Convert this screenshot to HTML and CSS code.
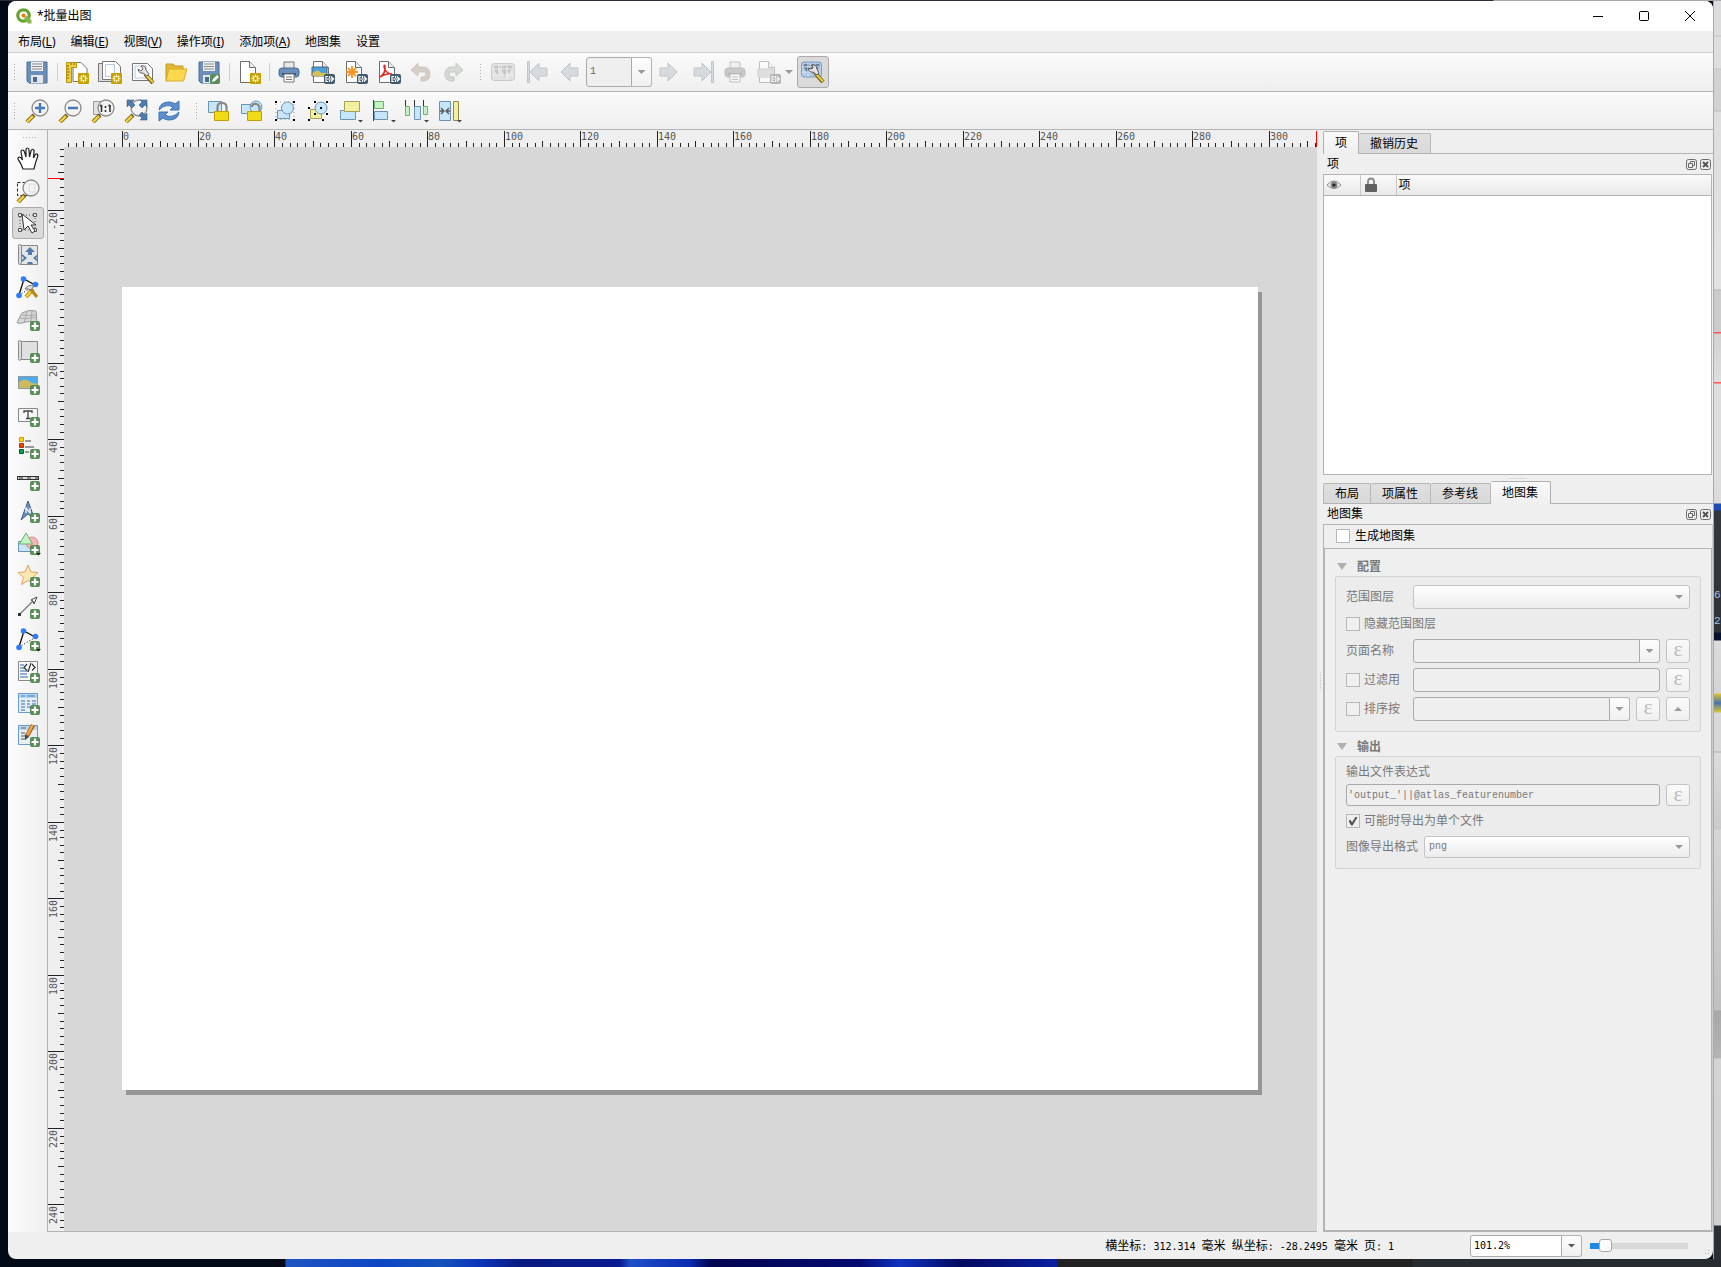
FILE: index.html
```html
<!DOCTYPE html>
<html lang="zh-CN">
<head>
    <meta charset="UTF-8">
    <meta name="viewport" content="width=device-width, initial-scale=1.0">
    <title>*批量出图</title>
    <link rel="stylesheet" href="styles.css">
</head>
<body>
    <!-- shared icon parts -->
    <svg class="sprite" aria-hidden="true">
        <symbol id="new" viewBox="0 0 24 24">
            <rect x="13" y="13" width="11" height="11" rx="1" fill="#c4a000"/>
            <path d="M18.500 14.500v8M14.500 18.500h8M15.700 15.700l5.600 5.600M21.300 15.700l-5.600 5.600" stroke="#fff6c0" stroke-width="1.300"/>
            <circle cx="18.500" cy="18.500" r="1.500" fill="#c4a000"/>
        </symbol>
        <symbol id="plus" viewBox="0 0 24 24">
            <rect x="14" y="14" width="10" height="10" rx="2" fill="#5a8c5a"/>
            <path d="M19 15.500v7M15.500 19h7" stroke="#fff" stroke-width="2.200"/>
        </symbol>
        <symbol id="export" viewBox="0 0 26 24">
            <rect x="14" y="14" width="11" height="10" rx="2" fill="#415a6e"/>
            <path d="M18 16.500h-2v5h2M17 19h6M21 16.500l2.500 2.500-2.500 2.500M19.500 16v2M19.500 20v2" fill="none" stroke="#fff" stroke-width="1.200"/>
        </symbol>
        <symbol id="sheet" viewBox="0 0 24 24">
            <path d="M3.500 1.500h9l6 6v15h-15z" fill="#fff" stroke="#6d6d6d"/>
            <path d="M12.500 1.500v6h6" fill="#eee" stroke="#6d6d6d"/>
        </symbol>
        <symbol id="floppy" viewBox="0 0 24 24">
            <path d="M2 2h20v21H4l-2-2z" fill="#6a8fbd" stroke="#4c6c94"/>
            <path d="M6 2h12v9H6z" fill="#f0f0f0"/>
            <path d="M7 4h10M7 6.500h10M7 9h10" stroke="#8a8a8a"/>
            <path d="M6 15h12v8H6z" fill="#e6e6e6"/>
            <path d="M8 17h4v5H8z" fill="#4c6c94"/>
        </symbol>
        <symbol id="lens" viewBox="0 0 24 24">
            <path d="M9 16l-7 7" stroke="#6b5416" stroke-width="4"/>
            <path d="M8 17l-6 6" stroke="#f5cf3b" stroke-width="2.500"/>
            <circle cx="15" cy="9" r="8" fill="#f3f3f3" stroke="#8a8a8a" stroke-width="1.300"/>
        </symbol>
        <symbol id="printer" viewBox="0 0 24 24">
            <path d="M7 2h10v8H7z" fill="#e8e8e8" stroke="#777"/>
            <rect x="2" y="8" width="20" height="9" rx="3" fill="#6a8fbd" stroke="#4c6c94"/>
            <path d="M5 14h14" stroke="#33506f" stroke-width="2"/>
            <path d="M7 14h10v8H7z" fill="#fff" stroke="#777"/>
            <path d="M9 17h6M9 19.500h6" stroke="#777"/>
        </symbol>
        <symbol id="world" viewBox="0 0 24 24">
            <rect x="0.500" y="3.500" width="23" height="17" rx="3" fill="#b4cdea" stroke="#6d8fb5"/>
            <path d="M3 6l6-1 1 3-3 3 2 3-1 4-2-4-3-4zM12 6l4-1 5 1 1 3-3 2-1 3-2-3-1 1v4l-2 1-1-5-2-2z" fill="#6b7f98"/>
            <path d="M1 9h22M1 15h22M8 4v16M16 4v16" stroke="#e4eefa"/>
        </symbol>
        <symbol id="nodes" viewBox="0 0 24 24">
            <path d="M3 20L8 4l11 6" fill="none" stroke="#111" stroke-width="1.300"/>
            <path d="M3 20l17-10" stroke="#111" stroke-dasharray="1 2"/>
            <circle cx="7.500" cy="4" r="2.800" fill="#2d7dff"/>
            <circle cx="19.500" cy="9.500" r="2.800" fill="#2d7dff"/>
            <circle cx="3" cy="20.500" r="2.800" fill="#2d7dff"/>
        </symbol>
        <symbol id="arrow-left" viewBox="0 0 24 24">
            <path d="M4 12L13 3v5h8v8h-8v5z" fill="#b9c2cc" stroke="#8e979f"/>
        </symbol>
        <symbol id="eye" viewBox="0 0 16 12">
            <path d="M1 6q7-8 14 0q-7 7-14 0z" fill="#f4f4f4" stroke="#888"/>
            <circle cx="8" cy="6" r="3.500" fill="#888"/><circle cx="8" cy="6" r="1.600" fill="#222"/>
        </symbol>
        <symbol id="dock-float" viewBox="0 0 11 11">
            <rect x="0.500" y="0.500" width="10" height="10" rx="2" fill="none" stroke="#6b6b6b"/>
            <path d="M4.500 4.500v-2h4v4h-2M2.500 4.500h4v4h-4z" fill="none" stroke="#6b6b6b"/>
        </symbol>
        <symbol id="dock-close" viewBox="0 0 11 11">
            <rect x="0.500" y="0.500" width="10" height="10" rx="2" fill="none" stroke="#6b6b6b"/>
            <path d="M3 3l5 5M8 3l-5 5" stroke="#555" stroke-width="2"/>
        </symbol>
    </svg>

    <div class="desktop">
        <div class="window">
            <header class="titlebar">
                <svg class="logo" viewBox="0 0 16 16"><circle cx="7.500" cy="7.500" r="5.700" fill="none" stroke="#6aa331" stroke-width="3.200"/><path d="M8.500 8.500l3-.5 4 4.500v3h-3.500l-3.500-4z" fill="#85b84b"/><circle cx="7.500" cy="7.500" r="2" fill="#ee7913"/></svg>
                <h1>*批量出图</h1>
                <div class="window-buttons">
                    <button type="button" aria-label="最小化"><svg viewBox="0 0 12 12"><path d="M1 6.500h10" stroke="#000"/></svg></button>
                    <button type="button" aria-label="最大化"><svg viewBox="0 0 12 12"><rect x="1.500" y="1.500" width="9" height="9" rx="1" fill="none" stroke="#000"/></svg></button>
                    <button type="button" aria-label="关闭"><svg viewBox="0 0 12 12"><path d="M1 1l10 10M11 1L1 11" stroke="#000"/></svg></button>
                </div>
            </header>

            <nav class="menubar">
                <button type="button">布局(<u>L</u>)</button>
                <button type="button">编辑(<u>E</u>)</button>
                <button type="button">视图(<u>V</u>)</button>
                <button type="button">操作项(<u>I</u>)</button>
                <button type="button">添加项(<u>A</u>)</button>
                <button type="button">地图集</button>
                <button type="button">设置</button>
            </nav>

            <div class="toolbar">
                <div class="tool-group">
                    <i class="handle"></i>
                    <button type="button" class="tool" aria-label="保存项目"><svg viewBox="0 0 24 24"><use href="#floppy"/></svg></button>
                    <i class="separator"></i>
                    <button type="button" class="tool" aria-label="新建布局"><svg viewBox="0 0 24 24"><path d="M8 2.500h8l6 6v13H8z" fill="#fff" stroke="#777"/><path d="M1.500 2.500h10v5h-5v15h-5z" fill="#f0cf3c" stroke="#b3950f"/><path d="M2 6h2M2 9h2M2 12h3M2 15h2M2 18h2M6 3v2M9 3v2" stroke="#7b6508"/><use href="#new"/></svg></button>
                    <button type="button" class="tool" aria-label="复制布局"><svg viewBox="0 0 24 24"><path d="M.5 3.500h14v18H.5z" fill="#ddd" stroke="#777"/><path d="M4.500 1.500h13l5 5v13h-18z" fill="#fff" stroke="#777"/><path d="M7.500 4.500h9v12h-9z" fill="none" stroke="#b3c8ec"/><use href="#new"/></svg></button>
                    <button type="button" class="tool" aria-label="布局管理器"><svg viewBox="0 0 24 24"><path d="M1.500 3.500h15l5 5v12h-20z" fill="#fff" stroke="#777"/><path d="M4 6h11v12H4z" fill="none" stroke="#b3c8ec"/><path d="M14 14l8 9" stroke="#6b5416" stroke-width="4"/><path d="M14.500 14.500l7.500 8" stroke="#f5cf3b" stroke-width="2"/><path d="M10 6q5-1 5 4l3 4-2 2-4-3q-4 1-5-4l3 2 2-2z" fill="#e3e3e3" stroke="#666"/></svg></button>
                    <button type="button" class="tool" aria-label="从模板添加项"><svg viewBox="0 0 24 24"><path d="M2 21V4h7l2 2h8v4" fill="#e2b832" stroke="#c69a20"/><path d="M2 21L5 9h18l-3.500 12z" fill="#fbd84f" stroke="#d8ae2b"/></svg></button>
                    <button type="button" class="tool" aria-label="另存为模板"><svg viewBox="0 0 24 24"><use href="#floppy"/><rect x="13" y="14" width="10" height="10" rx="2" fill="#5a8c5a"/><path d="M15 22l1-3 4-4 2 2-4 4z" fill="#fff"/></svg></button>
                    <i class="separator"></i>
                    <button type="button" class="tool" aria-label="添加页"><svg viewBox="0 0 24 24"><use href="#sheet"/><use href="#new"/></svg></button>
                    <i class="separator"></i>
                    <button type="button" class="tool" aria-label="打印"><svg viewBox="0 0 24 24"><use href="#printer"/></svg></button>
                    <button type="button" class="tool" aria-label="导出为图像"><svg viewBox="0 0 24 24"><use href="#sheet" width="24" height="24"/><path d="M2 7h15v9H2z" fill="#4aa0dc" stroke="#4f6373"/><path d="M2.500 13q5-5 9 0l5 0v3h-14z" fill="#d9bf52"/><use href="#export" width="26" height="24"/></svg></button>
                    <button type="button" class="tool" aria-label="导出为 SVG"><svg viewBox="0 0 24 24"><use href="#sheet" width="24" height="24"/><path d="M9 6v12M3 12h12M5 8l8 8M13 8l-8 8" stroke="#f7931e" stroke-width="1.800"/><use href="#export" width="26" height="24"/></svg></button>
                    <button type="button" class="tool" aria-label="导出为 PDF"><svg viewBox="0 0 24 24"><use href="#sheet" width="24" height="24"/><path d="M4 17q6-4 5-11q-1-2-1 1q1 6 8 7q-5-1-12 3z" fill="none" stroke="#e02b20" stroke-width="1.500"/><use href="#export" width="26" height="24"/></svg></button>
                    <button type="button" class="tool" disabled aria-label="撤销"><svg viewBox="0 0 24 24"><path d="M2 10l7-7v4h5q7 0 7 7t-7 7h-2v-4h2q3 0 3-3t-3-2H9v4z" fill="#b9a79c" stroke="#a39a94"/></svg></button>
                    <button type="button" class="tool" disabled aria-label="重做"><svg viewBox="0 0 24 24"><path d="M21 10l-7-7v4h-4q-7 0-7 7t7 7h2v-4h-2q-3 0-3-3t3-2h4v4z" fill="#b8c0b4" stroke="#979d94"/></svg></button>
                </div>
                <div class="tool-group">
                    <i class="handle"></i>
                    <button type="button" class="tool" disabled aria-label="预览地图集"><svg class="gray" viewBox="0 0 24 24"><use href="#world"/></svg></button>
                    <button type="button" class="tool" disabled aria-label="第一个要素"><svg viewBox="0 0 24 24"><path d="M3.500 1.500h2v21h-2z" fill="#b9c2cc" stroke="#8e979f"/><use href="#arrow-left" x="2"/></svg></button>
                    <button type="button" class="tool" disabled aria-label="上一个要素"><svg viewBox="0 0 24 24"><use href="#arrow-left"/></svg></button>
                    <div class="combo combo-page">
                        <input type="text" value="1" disabled aria-label="地图集页">
                        <button type="button" class="drop" disabled aria-label="选择页"></button>
                    </div>
                    <button type="button" class="tool" disabled aria-label="下一个要素"><svg class="flip" viewBox="0 0 24 24"><use href="#arrow-left"/></svg></button>
                    <button type="button" class="tool" disabled aria-label="最后一个要素"><svg class="flip" viewBox="0 0 24 24"><path d="M.5 1.500h2v21h-2z" fill="#b9c2cc" stroke="#8e979f"/><use href="#arrow-left" x="-1"/></svg></button>
                    <button type="button" class="tool" disabled aria-label="打印地图集"><svg class="gray" viewBox="0 0 24 24"><use href="#printer"/></svg></button>
                    <button type="button" class="tool tool-wide" disabled aria-label="导出地图集"><svg class="gray" viewBox="0 0 24 24"><use href="#sheet" width="24" height="24"/><path d="M2 9h15v8H2z" fill="#aac4d8" stroke="#7f93a3"/><path d="M2.500 14q5-4 9 0h5v3h-14z" fill="#d9bf52"/><use href="#export" width="26" height="24"/></svg></button>
                    <button type="button" class="tool active" aria-label="地图集设置"><svg viewBox="0 0 24 24"><use href="#world" x="0" y="-1" width="21" height="21"/><path d="M14 13l8 9" stroke="#6b5416" stroke-width="4"/><path d="M14.500 13.500l7.500 8" stroke="#f5cf3b" stroke-width="2"/><path d="M11 5q4-1 5 4l2 4-2 2-4-3q-4 1-5-4l3 1 2-1z" fill="#e3e3e3" stroke="#555"/></svg></button>
                </div>
            </div>

            <div class="toolbar toolbar-second">
                <div class="tool-group">
                    <i class="handle"></i>
                    <button type="button" class="tool" aria-label="放大"><svg viewBox="0 0 24 24"><use href="#lens"/><path d="M15 4v10M10 9h10" stroke="#4779b3" stroke-width="2.500"/></svg></button>
                    <button type="button" class="tool" aria-label="缩小"><svg viewBox="0 0 24 24"><use href="#lens"/><path d="M10 9h10" stroke="#4779b3" stroke-width="2.500"/></svg></button>
                    <button type="button" class="tool" aria-label="缩放到 100%"><svg viewBox="0 0 24 24"><path d="M2.500 2.500h12v13h-12z" fill="#e2e2e2" stroke="#999"/><use href="#lens"/><path d="M10.500 6v7M9 7l1.500-1M19 6v7M17.500 7l1.500-1M14.500 7v2M14.500 11v2" stroke="#333" stroke-width="1.600"/></svg></button>
                    <button type="button" class="tool" aria-label="全图缩放"><svg viewBox="0 0 24 24"><use href="#lens"/><path d="M3 1h7l-2 2 3 3-3 3-3-3-2 2zM23 1h-7l2 2-3 3 3 3 3-3 2 2zM23 21h-7l2-2-3-3 3-3 3 3 2-2z" fill="#4f7cac" stroke="#3b5f87" stroke-width=".6"/></svg></button>
                    <button type="button" class="tool" aria-label="刷新视图"><svg viewBox="0 0 24 24"><path d="M2 11q1-8 10-8 4 0 6 2l4-3v9h-9l3-3q-7-4-14 3z" fill="#5b8fce" stroke="#3f74b4"/><path d="M22 13q-1 8-10 8-4 0-6-2l-4 3v-9h9l-3 3q7 4 14-3z" fill="#5b8fce" stroke="#3f74b4"/></svg></button>
                </div>
                <div class="tool-group">
                    <i class="handle"></i>
                    <button type="button" class="tool" aria-label="锁定选中项"><svg viewBox="0 0 24 24"><path d="M1.500 2.500h13v11h-13z" fill="#c8e6fa" stroke="#6b93b3"/><path d="M10.500 12V8q0-4 4.500-4t4.500 4v4" fill="none" stroke="#888" stroke-width="2.200"/><path d="M7.500 12.500h14v9h-14z" fill="#f1db16" stroke="#c4a000"/></svg></button>
                    <button type="button" class="tool" aria-label="解锁所有项"><svg viewBox="0 0 24 24"><path d="M1.500 5.500h10v9h-10z" fill="#c8e6fa" stroke="#6b93b3"/><circle cx="16" cy="8" r="6" fill="#c8e6fa" stroke="#6b93b3"/><path d="M11.500 8q1-4 5-3 3 1 3 4v4" fill="none" stroke="#888" stroke-width="2.200"/><path d="M7.500 12.500h14v9h-14z" fill="#f1db16" stroke="#c4a000"/></svg></button>
                    <button type="button" class="tool" aria-label="组合"><svg viewBox="0 0 24 24"><path d="M4.500 11.500h12v8h-12z" fill="#c8e6fa" stroke="#6b93b3"/><circle cx="14.500" cy="9" r="6" fill="#c8e6fa" stroke="#6b93b3"/><path d="M3 3h18v17.500H3z" fill="none" stroke="#999" stroke-dasharray="1 3"/><path d="M2 2h2v2H2zM20 2h2v2h-2zM2 20h2v2H2zM20 20h2v2h-2z"/></svg></button>
                    <button type="button" class="tool" aria-label="取消组合"><svg viewBox="0 0 24 24"><path d="M4.500 10.500h11v9h-11z" fill="#f5f0a0" stroke="#a5a05a"/><circle cx="15" cy="9" r="6" fill="#c8e6fa" stroke="#6b93b3"/><path d="M8 2h2v2H8zM20 2h2v2h-2zM8 14h2v2H8zM20 14h2v2h-2zM2 8h2v2H2zM2 20h2v2H2zM16 20h2v2h-2zM14 8h2v2h-2z"/></svg></button>
                    <button type="button" class="tool" aria-label="提升选中项"><svg viewBox="0 0 24 24"><path d="M1.500 11.500h15v9h-15z" fill="#c8e6fa" stroke="#6b93b3"/><path d="M5.500 2.500h15v10h-15z" fill="#f3efa0" stroke="#a5a05a"/><path d="M19 21h5l-2.500 2.500z" fill="#444"/></svg></button>
                    <button type="button" class="tool" aria-label="左对齐"><svg viewBox="0 0 24 24"><path d="M1.500 1v21" stroke="#444"/><path d="M2.500 2.500h9v7h-9z" fill="#c4f4c4" stroke="#70b070"/><path d="M2.500 12.500h13v8h-13z" fill="#c8e6fa" stroke="#6b93b3"/><path d="M19 21h5l-2.500 2.500z" fill="#444"/></svg></button>
                    <button type="button" class="tool" aria-label="分布"><svg viewBox="0 0 24 24"><path d="M.5 1v8M9.500 1v8M18.500 1v8" stroke="#333"/><path d="M.5 7.500h4v9h-4zM18.500 7.500h4v8h-4z" fill="#c4f4c4" stroke="#70b070"/><path d="M9.500 7.500h6v13h-6z" fill="#c8e6fa" stroke="#6b93b3"/><path d="M19 21h5l-2.500 2.500z" fill="#444"/></svg></button>
                    <button type="button" class="tool" aria-label="调整大小"><svg viewBox="0 0 24 24"><path d="M1.500 2.500h11v19h-11z" fill="#c8e6fa" stroke="#6b93b3"/><path d="M15.500 2.500h5v19h-5z" fill="#f3efa0" stroke="#8f8a4a"/><path d="M2 12h3M12 12H9M3 9l3 3-3 3M11 9l-3 3 3 3" fill="none" stroke="#555" stroke-width="1.300"/><path d="M19 21h5l-2.500 2.500z" fill="#444"/></svg></button>
                </div>
            </div>

            <main class="workspace">
                <div class="toolbox">
                    <i class="handle handle-wide"></i>
                    <button type="button" class="tool" aria-label="平移布局"><svg viewBox="0 0 24 24"><path d="M7 22Q5 16 2.500 13q-1.500-2 .5-3 2 0 3.500 3L5 5q0-2 1.500-2T8.500 5L10 10V3q0-2 1.500-2T13 3l.5 7L15 4q.5-2 2-1.500t1 2L17.500 11 19 8q1-1.500 2-1 1.500 1 .5 3-2 5-3.500 12z" fill="#fff" stroke="#222" stroke-width="1.200"/></svg></button>
                    <button type="button" class="tool" aria-label="缩放"><svg viewBox="0 0 24 24"><path d="M1.500 3.500h14v13h-14z" fill="none" stroke="#222" stroke-dasharray="3 2"/><use href="#lens"/><path d="M13 5h6v8h-6z" fill="none" stroke="#ccc" stroke-dasharray="1 1"/></svg></button>
                    <button type="button" class="tool active" aria-label="选择/移动项"><svg viewBox="0 0 24 24"><path d="M4 4h15v15H4z" fill="none" stroke="#555" stroke-dasharray="1 2"/><path d="M2.500 2.500h3v3h-3zM17.500 2.500h3v3h-3zM2.500 17.500h3v3h-3zM17.500 17.500h3v3h-3z" fill="#eee" stroke="#555"/><path d="M6 3l2 16 4-4 4 7 3-2-4-6h5z" fill="#fff" stroke="#333"/></svg></button>
                    <button type="button" class="tool" aria-label="移动项内容"><svg viewBox="0 0 24 24"><path d="M4.500 2.500h17v19h-17z" fill="#e6e6e6" stroke="#888"/><path d="M2.500 3.500q-1-2 1-2t2 2v16q-1 2-2 2t-1-2z" fill="#ddd" stroke="#888"/><path d="M14 4l5 5h-3v3h-4V9H9zM6 11l5 4-5 4v-2l2-2-2-2zM22 11l-5 4 5 4v-2l-2-2 2-2zM11 21l1-2h4l1 2z" fill="#4f7cac"/></svg></button>
                    <button type="button" class="tool" aria-label="编辑节点项"><svg viewBox="0 0 24 24"><use href="#nodes"/><path d="M10 22l7-8" stroke="#a57f0e" stroke-width="4"/><path d="M10 22l6-7" stroke="#f5cf3b" stroke-width="2.500"/><path d="M13 12l8 10" stroke="#b8860b" stroke-width="3"/><path d="M9 14q3-5 9-3l-3 4-3-1z" fill="#ddd" stroke="#777"/></svg></button>
                    <button type="button" class="tool" aria-label="添加地图"><svg viewBox="0 0 24 24"><path d="M1 16Q4 9 6 6q7-4 14-2l1 12q-6-3-11-1-5 2-9 1z" fill="#d8d8d8" stroke="#999"/><path d="M4 11q6 2 9 0 5-2 8 1M6 8q6 1 14 0M11 5L8 16M16 4l-1 11" fill="none" stroke="#aaa"/><use href="#plus"/></svg></button>
                    <button type="button" class="tool" aria-label="添加 3D 地图"><svg viewBox="0 0 24 24"><path d="M4.500 2.500h17v18h-17z" fill="#e0e0e0" stroke="#888"/><path d="M2.500 3.500q-1-2 1-2t2 2v16q-1 2-2 2t-1-2z" fill="#ddd" stroke="#888"/><use href="#plus"/></svg></button>
                    <button type="button" class="tool" aria-label="添加图片"><svg viewBox="0 0 24 24"><path d="M2 5h20v13H2z" fill="#4dabf0"/><path d="M2 12q6-6 11-2t9 2v6H2z" fill="#cdb95e"/><path d="M2.500 5.500h19v12h-19z" fill="none" stroke="#8b9aa0"/><use href="#plus"/></svg></button>
                    <button type="button" class="tool" aria-label="添加标注"><svg viewBox="0 0 24 24"><path d="M2.500 5.500h19v13h-19z" fill="#f7f7f7" stroke="#888"/><path d="M8 10V8h8v2M12 8v7M10 15.500h4" fill="none" stroke="#444" stroke-width="1.300"/><use href="#plus"/></svg></button>
                    <button type="button" class="tool" aria-label="添加图例"><svg viewBox="0 0 24 24"><path d="M3.500 2.500h4v4h-4z" fill="#ffd500" stroke="#e09000"/><path d="M3.500 8.500h4v4h-4z" fill="#f4420a" stroke="#b83008"/><path d="M3.500 14.500h4v4h-4z" fill="#00a550" stroke="#04592d"/><path d="M9 6h6M9 12h9M9 17h4" stroke="#999" stroke-width="2"/><use href="#plus"/></svg></button>
                    <button type="button" class="tool" aria-label="添加比例尺"><svg viewBox="0 0 24 24"><rect x="1.500" y="9.500" width="21" height="3" fill="#ddd" stroke="#333"/><path d="M3 11h4M11 11h4M19 11h3" stroke="#888" stroke-width="2"/><use href="#plus"/></svg></button>
                    <button type="button" class="tool" aria-label="添加指北针"><svg viewBox="0 0 24 24"><path d="M12 2l7 19-7-6-7 6z" fill="#6a8fbd" stroke="#41618a"/><path d="M10 14V9l4 5V9" fill="none" stroke="#fff" stroke-width="1.200"/><use href="#plus"/></svg></button>
                    <button type="button" class="tool" aria-label="添加形状"><svg viewBox="0 0 24 24"><path d="M2.500 10.500h13v10h-13z" fill="#c8e6fa" stroke="#6b93b3"/><circle cx="16" cy="12" r="6" fill="#f8b4b4" stroke="#d88"/><path d="M10 2l6.500 11h-13z" fill="#c4f4c4" stroke="#70b070"/><use href="#plus"/><path d="M20 22h5l-2.500 2.500z" fill="#222"/></svg></button>
                    <button type="button" class="tool" aria-label="添加标记"><svg viewBox="0 0 24 24"><path d="M12 2l3 7 7 .500-5.500 5 2 7L12 17.500 5.500 21.500l2-7L2 9.500 9 9z" fill="#fce9b0" stroke="#dfa36a"/><use href="#plus"/></svg></button>
                    <button type="button" class="tool" aria-label="添加箭头"><svg viewBox="0 0 24 24"><path d="M4 19L17 6" stroke="#777" stroke-width="1.300"/><path d="M2 18h3v3H2z" fill="#333"/><path d="M21 2l-6 3 2 1 1 3z" fill="#fff" stroke="#444"/><use href="#plus"/></svg></button>
                    <button type="button" class="tool" aria-label="添加节点项"><svg viewBox="0 0 24 24"><use href="#nodes"/><use href="#plus"/><path d="M20 22h5l-2.500 2.500z" fill="#222"/></svg></button>
                    <button type="button" class="tool" aria-label="添加 HTML"><svg viewBox="0 0 24 24"><path d="M2.500 2.500h19v19h-19z" fill="#fafafa" stroke="#888"/><path d="M4 6h4M4 9h4M4 12h8M4 15h7M4 18h8" stroke="#6a9bd0" stroke-width="1.500"/><path d="M11 5L8 8.500l3 3M16 5l3 3.500-3 3M15 4l-3 9" fill="none" stroke="#333" stroke-width="1.200"/><use href="#plus"/></svg></button>
                    <button type="button" class="tool" aria-label="添加固定表格"><svg viewBox="0 0 24 24"><path d="M2.500 2.500h19v19h-19z" fill="#e9eef2" stroke="#6a9bd0"/><path d="M3 3h18v4H3z" fill="#b7d8f0"/><path d="M5 5h4M11 5h8M5 10h4M11 10h3M16 10h4M5 13h4M11 13h3M16 13h4M5 16h4M11 16h3M5 19h4" stroke="#6a9bd0" stroke-width="1.300"/><use href="#plus"/></svg></button>
                    <button type="button" class="tool" aria-label="添加属性表"><svg viewBox="0 0 24 24"><path d="M2.500 2.500h19v19h-19z" fill="#e9eef2" stroke="#6a9bd0"/><path d="M3 3h18v4H3z" fill="#b7d8f0"/><path d="M5 5h5M5 10h4M5 13h4M5 16h4" stroke="#888" stroke-width="1.300"/><path d="M11 13l6-11" stroke="#a4621b" stroke-width="4.500"/><path d="M11.500 12l5-10" stroke="#f0a848" stroke-width="2.500"/><path d="M9 11.500l4 2.500-4 3z" fill="#444"/><use href="#plus"/></svg></button>
                </div>

                <section class="view">
                    <svg class="ruler ruler-top" id="ruler-top"></svg>
                    <svg class="ruler ruler-left" id="ruler-left"></svg>
                    <div class="canvas" id="canvas">
                        <div class="paper" id="paper"></div>
                    </div>
                </section>

                <div class="splitter splitter-v"></div>

                <aside class="docks">
                    <section class="dock">
                        <div class="tabs">
                            <button type="button" class="tab selected">项</button>
                            <button type="button" class="tab">撤销历史</button>
                        </div>
                        <div class="dock-title">
                            <h2>项</h2>
                            <button type="button" aria-label="浮动"><svg viewBox="0 0 11 11"><use href="#dock-float"/></svg></button>
                            <button type="button" aria-label="关闭"><svg viewBox="0 0 11 11"><use href="#dock-close"/></svg></button>
                        </div>
                        <div class="item-list">
                            <table>
                                <thead>
                                    <tr>
                                        <th class="col-icon"><svg class="eye" viewBox="0 0 16 12"><use href="#eye"/></svg></th>
                                        <th class="col-icon"><svg class="lock" viewBox="0 0 12 15"><path d="M3 8V4.500q0-3 3-3t3 3V8" fill="none" stroke="#888" stroke-width="1.800"/><rect y="7" width="12" height="8" rx="1" fill="#606060"/></svg></th>
                                        <th>项</th>
                                    </tr>
                                </thead>
                            </table>
                        </div>
                    </section>

                    <div class="splitter splitter-h"></div>

                    <section class="dock">
                        <div class="tabs">
                            <button type="button" class="tab">布局</button>
                            <button type="button" class="tab">项属性</button>
                            <button type="button" class="tab">参考线</button>
                            <button type="button" class="tab selected">地图集</button>
                        </div>
                        <div class="dock-title">
                            <h2>地图集</h2>
                            <button type="button" aria-label="浮动"><svg viewBox="0 0 11 11"><use href="#dock-float"/></svg></button>
                            <button type="button" aria-label="关闭"><svg viewBox="0 0 11 11"><use href="#dock-close"/></svg></button>
                        </div>
                        <div class="atlas">
                            <label class="check atlas-enable"><input type="checkbox">生成地图集</label>
                            <div class="atlas-body">
                                <h3>配置</h3>
                                <div class="group">
                                    <div class="row">
                                        <label class="name" for="coverage">范围图层</label>
                                        <div class="select"><select id="coverage" disabled><option></option></select></div>
                                    </div>
                                    <label class="check"><input type="checkbox" disabled>隐藏范围图层</label>
                                    <div class="row">
                                        <label class="name" for="page-name">页面名称</label>
                                        <div class="combo">
                                            <input type="text" id="page-name" disabled>
                                            <button type="button" class="drop" disabled aria-label="选择字段"></button>
                                        </div>
                                        <button type="button" class="small" disabled>ε</button>
                                    </div>
                                    <div class="row">
                                        <label class="check name"><input type="checkbox" disabled>过滤用</label>
                                        <input type="text" class="text" disabled aria-label="过滤表达式">
                                        <button type="button" class="small" disabled>ε</button>
                                    </div>
                                    <div class="row">
                                        <label class="check name"><input type="checkbox" disabled>排序按</label>
                                        <div class="combo">
                                            <input type="text" disabled aria-label="排序表达式">
                                            <button type="button" class="drop" disabled aria-label="选择字段"></button>
                                        </div>
                                        <button type="button" class="small" disabled>ε</button>
                                        <button type="button" class="small up" disabled aria-label="排序方向"></button>
                                    </div>
                                </div>
                                <h3>输出</h3>
                                <div class="group group-output">
                                    <label for="filename">输出文件表达式</label>
                                    <div class="row">
                                        <input type="text" class="text" id="filename" value="'output_'||@atlas_featurenumber" disabled>
                                        <button type="button" class="small" disabled>ε</button>
                                    </div>
                                    <label class="check"><input type="checkbox" checked disabled>可能时导出为单个文件</label>
                                    <div class="row">
                                        <label class="name-auto" for="format">图像导出格式</label>
                                        <div class="select"><select id="format" disabled><option>png</option></select></div>
                                    </div>
                                </div>
                            </div>
                        </div>
                    </section>
                </aside>
            </main>

            <footer class="statusbar">
                <p class="coords"><span>横坐标</span>: 312.314 <span>毫米</span> <span>纵坐标</span>: -28.2495 <span>毫米</span> <span>页</span>: 1</p>
                <div class="combo combo-zoom">
                    <input type="text" value="101.2%" aria-label="缩放比例">
                    <button type="button" class="drop" aria-label="选择缩放比例"></button>
                </div>
                <input type="range" class="zoom" min="0" max="100" value="11" aria-label="缩放">
                <i class="grip"></i>
            </footer>
        </div>
        <div class="behind"><span>6</span><span>2</span></div>
    </div>

    <script src="rulers.js"></script>
</body>
</html>
```
FILE: styles.css
```css
* {
    box-sizing: border-box;
}
body {
    margin: 0;
    font: 12px/16px "Noto Sans", "Noto Sans CJK SC", sans-serif;
    color: #000;
    background: #020a18;
}
h1, h2, h3, p {
    margin: 0;
    font-size: 12px;
    font-weight: normal;
}
button {
    font: inherit;
    color: inherit;
    padding: 0;
    border: 0;
    background: none;
}
input, select {
    font: 10px/16px "Liberation Mono", "Noto Sans CJK SC", monospace;
    color: inherit;
    margin: 0;
    min-width: 0;
}
svg {
    display: block;
}
.sprite {
    position: absolute;
    width: 0;
    height: 0;
}

/* desktop around the window */
.desktop {
    display: grid;
    grid-template-columns: 1fr 8px;
    height: 100vh;
    padding: 1px 0 8px 8px;
    background:
        linear-gradient(to right, #020a18 285px, #1f55c0 286px, #0d45c4 380px, #1552bb 440px, #0c35ba 480px, #0a1a80 520px, #0a1a90 620px, #1e50c8 630px, #0a2bb0 690px, #020550 710px, #040a70 860px, #1033c0 900px, #040a60 960px, #0a20a0 1057px, #222 1058px, #222 1412px, #262c30 1413px) bottom / 100% 8px no-repeat,
        linear-gradient(to right, #2b2d3c 1493px, #a8a8a8 1494px) top / 100% 1px no-repeat,
        #020a18;
}
.behind {
    padding-top: 581px;
    border-left: 1px solid #aaa;
    font: 11px/26px "Liberation Mono", monospace;
    color: #a8c0d8;
    background: linear-gradient(#dcdcdc 34px, #c4c4c4 35px, #dedede 36px, #dedede 67px, #c4c4c4 68px, #d2d2d2 69px, #d2d2d2 109px, #bbb 110px, #dedede 111px, #e2e2e2 288px, #b4b4b4 289px, #ccc 290px, #ccc 331px, #f55 331px, #f55 332px, #d2d2d2 333px, #dedede 381px, #f55 381px, #f55 382px, #dedede 383px, #dcdcdc 502px, #1e4ab4 503px, #1e4ab4 509px, #33383c 510px, #2e3338 631px, #06122c 632px, #06122c 639px, #dcdcdc 640px, #d4d4d4 692px, #d8c23c 693px, #4a74a8 702px, #d8c23c 711px, #d8d8d8 712px, #d8d8d8 750px, #b0b0b0 751px, #dcdcdc 752px, #cacaca 828px, #d6d6d6 829px, #c0c0c0 1009px, #a8a8a8 1010px, #b4b4b4 1057px, #d4d4d4 1058px, #d0d0d0 1224px, #2a3034 1225px);
}
.behind span {
    display: block;
}

.window {
    display: flex;
    flex-direction: column;
    min-width: 0;
    overflow: hidden;
    background: #efefef;
    border-radius: 8px;
}
.titlebar {
    display: flex;
    align-items: center;
    height: 30px;
    padding-left: 8px;
    background: #fff;
}
.logo {
    width: 16px;
    height: 16px;
    margin-right: 5px;
}
.window-buttons {
    display: flex;
    margin-left: auto;
}
.window-buttons button {
    display: grid;
    place-items: center;
    width: 46px;
    height: 30px;
}
.window-buttons svg {
    width: 12px;
    height: 12px;
}

.menubar {
    display: flex;
    gap: 15px;
    height: 22px;
    padding: 0 10px;
    border-bottom: 1px solid #d0d0d0;
}

/* toolbars */
.toolbar {
    display: flex;
    gap: 5px;
    height: 39px;
    padding-left: 1px;
    border-bottom: 1px solid #b4b4b4;
    background: linear-gradient(#fafafa, #efefef);
}
.toolbar-second {
    gap: 6px;
    height: 38px;
}
.tool-group {
    display: flex;
    align-items: center;
    gap: 1px;
}
.handle {
    width: 4px;
    height: 18px;
    margin: 0 3px 0 4px;
    background: radial-gradient(circle, #b0b0b0 1px, transparent 1px) 0 0 / 3px 3px;
}
.handle-wide {
    width: 16px;
    height: 4px;
    margin: 6px auto 3px;
}
.separator {
    width: 6px;
    height: 18px;
    background: linear-gradient(#d0d0d0, #d0d0d0) center / 1px 100% no-repeat;
}
.tool {
    display: grid;
    place-items: center;
    width: 32px;
    height: 32px;
    border: 1px solid transparent;
    border-radius: 3px;
}
.tool svg {
    width: 24px;
    height: 24px;
    overflow: visible;
}
.tool use {
    overflow: visible;
}
.tool:disabled svg {
    opacity: 0.5;
}
.tool svg.gray {
    filter: grayscale(1);
    opacity: 0.4;
}
.tool svg.flip {
    transform: scaleX(-1);
}
.tool.active {
    border-color: #aaa;
    background: #dadada;
}
.tool-wide {
    grid-template-columns: 30px 12px;
    width: 44px;
}
.tool-wide::after,
.drop::after,
.select::after,
.up::after {
    content: "";
    width: 8px;
    height: 4px;
    background: #999;
    clip-path: polygon(0 0, 100% 0, 50% 100%);
}

/* fields */
.combo, .select {
    display: flex;
    flex: 1;
    height: 24px;
    min-width: 0;
}
.combo input, .text {
    flex: 1;
    width: 0;
    padding: 0 3px;
    border: 1px solid #aaa;
    border-radius: 3px;
    background: #efefef;
}
.combo input {
    border-radius: 3px 0 0 3px;
}
.text {
    height: 24px;
    padding: 0 1px;
}
.drop {
    display: grid;
    place-items: center;
    width: 20px;
    border: 1px solid #b4b4b4;
    border-left: 0;
    border-radius: 0 3px 3px 0;
    background: linear-gradient(#fdfdfd, #f0f0f0);
}
.combo-page {
    flex: none;
    width: 66px;
    height: 30px;
    color: #666;
}
.select {
    align-items: center;
}
.select select {
    flex: 1;
    height: 100%;
    padding: 0 4px;
    appearance: none;
    border: 1px solid #c4c4c4;
    border-radius: 3px;
    background: linear-gradient(#fff, #ececec);
    opacity: 1;
}
.select::after {
    margin: 0 7px 0 -15px;
}
.small {
    display: grid;
    place-items: center;
    flex: none;
    width: 24px;
    height: 24px;
    margin-left: 6px;
    padding-bottom: 4px;
    border: 1px solid #c4c4c4;
    border-radius: 3px;
    background: linear-gradient(#fafafa, #f0f0f0);
    font: 22px/18px "Liberation Serif", serif;
    color: #bbb;
}
.up {
    padding: 0;
}
.up::after {
    clip-path: polygon(50% 0, 100% 100%, 0 100%);
}
.check {
    display: flex;
    align-items: center;
    gap: 4px;
}
.check input {
    display: grid;
    place-items: center;
    width: 14px;
    height: 14px;
    appearance: none;
    border: 1px solid #b8b8b8;
    background: #fff;
}
.check input:disabled {
    background: #efefef;
}
.check input:checked::after {
    content: "";
    width: 9px;
    height: 9px;
    background: #555;
    clip-path: polygon(0 50%, 20% 35%, 40% 65%, 80% 0, 100% 8%, 45% 100%, 30% 100%);
}

/* layout view */
.workspace {
    display: grid;
    grid-template-columns: 40px 1fr 6px 390px;
    flex: 1;
    min-height: 0;
}
.toolbox {
    display: flex;
    flex-direction: column;
    padding-left: 4px;
    border-right: 1px solid #b4b4b4;
    background: linear-gradient(to right, #fcfcfc, #efefef);
}
.view {
    display: grid;
    grid-template-columns: 16px 1fr;
    grid-template-rows: 16px 1fr;
    min-width: 0;
    min-height: 0;
    padding-top: 1px;
    border-bottom: 1px solid #b4b4b4;
}
.ruler {
    width: 100%;
    height: 100%;
    overflow: hidden;
    font: 10px "DejaVu Sans Mono", monospace;
    fill: #555;
}
.ruler-top {
    grid-column: 2;
}
.ruler rect {
    fill: #222;
}
.ruler .cursor {
    fill: #f00;
}
.canvas {
    display: grid;
    place-items: center;
    min-height: 0;
    padding: 0 1px 1px 0;
    overflow: hidden;
    background: #d7d7d7;
}
.paper {
    width: 1136px;
    aspect-ratio: 297 / 210;
    background: #fff;
    box-shadow: 4px 5px #969696;
}
.splitter {
    background: radial-gradient(circle, #b8b8b8 1px, transparent 1px) center / 3px 3px;
}
.splitter-v {
    align-self: center;
    width: 3px;
    height: 18px;
    justify-self: center;
}
.splitter-h {
    width: 18px;
    height: 3px;
    align-self: center;
    justify-self: center;
}

/* docks */
.docks {
    display: grid;
    grid-template-rows: 345px 6px 1fr;
    min-height: 0;
}
.dock {
    display: flex;
    flex-direction: column;
    min-height: 0;
}
.dock:first-child {
    padding-top: 1px;
}
.tabs {
    display: flex;
    align-items: flex-end;
    height: 23px;
    border-bottom: 1px solid #b4b4b4;
}
.tab {
    height: 20px;
    padding: 0 12px 0 11px;
    border: 1px solid #b8b8b8;
    border-left-width: 0;
    border-bottom: 0;
    border-radius: 2px 2px 0 0;
    background: linear-gradient(#e0e0e0, #d8d8d8);
}
.tab:first-child {
    padding: 0 11px;
    border-left-width: 1px;
}
.tab.selected {
    height: 23px;
    margin-bottom: -1px;
    border-color: #b0b0b0;
    background: linear-gradient(#fafafa, #efefef);
}
.dock-title {
    display: flex;
    align-items: center;
    gap: 3px;
    height: 20px;
    padding: 0 2px 0 4px;
}
.dock-title h2 {
    flex: 1;
}
.dock-title svg {
    width: 11px;
    height: 11px;
}
.item-list {
    flex: 1;
    margin-right: 1px;
    border: 1px solid #b4b4b4;
    background: #fff;
}
.item-list table {
    width: 100%;
    border-collapse: collapse;
    table-layout: fixed;
    background: linear-gradient(#fafafa, #e9e9e9);
}
.item-list th {
    height: 20px;
    padding: 0 2px;
    border-bottom: 1px solid #b0b0b0;
    font-weight: normal;
    line-height: 16px;
    text-align: left;
}
.item-list .col-icon {
    width: 36px;
    border-right: 1px solid #c8c8c8;
}
.eye {
    width: 16px;
    height: 12px;
}
.lock {
    width: 12px;
    height: 15px;
    margin-left: 2px;
}

.atlas {
    display: flex;
    flex-direction: column;
    flex: 1;
    border: 1px solid #b4b4b4;
    border-right-color: #ccc;
}
.atlas-enable {
    height: 23px;
    padding: 0 12px 2px;
    gap: 5px;
}
.atlas-body {
    flex: 1;
    padding: 7px 10px;
    border: 1px solid #b4b4b4;
    color: #787878;
}
.atlas h3 {
    display: flex;
    align-items: center;
    gap: 10px;
    height: 20px;
    padding: 1px 0 0 2px;
    font-weight: bold;
}
.atlas h3::before {
    content: "";
    width: 10px;
    height: 7px;
    background: #b0b0b0;
    clip-path: polygon(0 0, 100% 0, 50% 100%);
}
.group {
    display: flex;
    flex-direction: column;
    gap: 5px;
    margin-bottom: 4px;
    padding: 8px 10px 10px;
    border: 1px solid #d4d4d4;
    border-radius: 2px;
    background: #ececec;
}
.group > label {
    line-height: 14px;
}
.group > .check {
    margin: 3px 0;
}
.row {
    display: flex;
    align-items: center;
}
.name {
    width: 67px;
}
.name-auto {
    margin-right: 6px;
}
.group-output .text,
.group-output .select,
.group-output .small {
    height: 22px;
}

/* status bar */
.statusbar {
    display: flex;
    align-items: center;
    height: 27px;
    padding-right: 2px;
}
.coords {
    margin-left: auto;
    font: 10px/16px "DejaVu Sans Mono", "Noto Sans CJK SC", monospace;
}
.coords span {
    font: 12px/16px "Noto Sans CJK SC", sans-serif;
}
.combo-zoom {
    flex: none;
    width: 112px;
    height: 22px;
    margin: 0 8px 0 76px;
}
.combo-zoom input {
    background: #fff;
    font-family: "DejaVu Sans Mono", monospace;
}
.combo-zoom .drop::after {
    background: #555;
}
.zoom {
    width: 98px;
    height: 14px;
    appearance: none;
    background: linear-gradient(to right, #1e88e5 12px, #d8d8d8 12px) center / 100% 6px no-repeat;
}
.zoom::-webkit-slider-thumb {
    appearance: none;
    width: 13px;
    height: 13px;
    border: 1px solid #a8a8a8;
    border-radius: 3px;
    background: #fbfbfb;
}
.grip {
    width: 10px;
    height: 10px;
    margin: 10px 0 0 13px;
    background: radial-gradient(circle, #aaa 1px, transparent 1px) 0 0 / 3px 3px;
    clip-path: polygon(100% 0, 100% 100%, 0 100%);
}
```
FILE: rulers.js
```js
const SVG = "http://www.w3.org/2000/svg";
const PAGE_WIDTH_MM = 297;
const CURSOR = { x: 312.314, y: -28.2495 };

const canvas = document.getElementById("canvas");
const paper = document.getElementById("paper");

function add(parent, name, attributes) {
    const node = document.createElementNS(SVG, name);
    for (const key in attributes) {
        node.setAttribute(key, attributes[key]);
    }
    parent.appendChild(node);
    return node;
}

function drawRuler(ruler, origin, length, scale, cursor, vertical) {
    ruler.replaceChildren();
    const line = (pos, size, cls) => add(ruler, "rect", vertical
        ? { x: 16 - size, y: pos, width: size, height: 1, class: cls }
        : { x: pos, y: 16 - size, width: 1, height: size, class: cls });

    // one tick every 2 mm, longer at 10 mm, full height with a label at 20 mm
    const first = Math.ceil(-origin / scale / 2) * 2;
    for (let mm = first; origin + mm * scale < length; mm += 2) {
        const pos = Math.floor(origin + mm * scale);
        line(pos, mm % 20 === 0 ? 16 : mm % 10 === 0 ? 6 : 4, "tick");
        if (mm % 20 !== 0) continue;
        const label = add(ruler, "text", vertical
            ? { transform: `translate(9 ${pos + 2}) rotate(-90)`, "text-anchor": "end" }
            : { x: pos + 1, y: 9 });
        label.textContent = mm;
    }
    line(Math.floor(origin + cursor * scale), 16, "cursor");
}

function drawRulers() {
    const area = canvas.getBoundingClientRect();
    const page = paper.getBoundingClientRect();
    const scale = page.width / PAGE_WIDTH_MM;
    drawRuler(document.getElementById("ruler-top"), page.left - area.left, area.width, scale, CURSOR.x, false);
    drawRuler(document.getElementById("ruler-left"), page.top - area.top, area.height, scale, CURSOR.y, true);
}

window.addEventListener("resize", drawRulers);
drawRulers();
```
